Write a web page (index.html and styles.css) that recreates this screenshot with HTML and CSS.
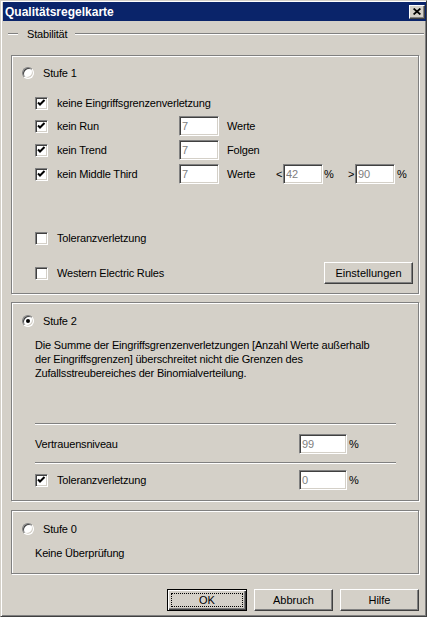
FILE: index.html
```html
<!DOCTYPE html>
<html lang="de">
<head>
  <meta charset="UTF-8">
  <title>Qualitätsregelkarte</title>
  <link rel="stylesheet" href="styles.css">
</head>
<body>
<div class="window">
  <div class="titlebar">
    <span class="title">Qualitätsregelkarte</span>
    <span class="close-btn">
      <svg width="8" height="7" viewBox="0 0 8 7"><path d="M0.6 0.5 L7.4 6.5 M7.4 0.5 L0.6 6.5" stroke="#000" stroke-width="1.7"/></svg>
    </span>
  </div>

  <div class="client">
    <div class="section-head">
      <span class="rule rule-short"></span>
      <span class="section-label">Stabilität</span>
      <span class="rule rule-long"></span>
    </div>

    <!-- Stufe 1 -->
    <div class="group group-s1">
      <div class="radio-row"><span class="radio"></span><span>Stufe 1</span></div>

      <div class="check-row s1-first">
        <span class="check"><svg width="9" height="9" viewBox="0 0 9 9"><polyline points="1,3.5 3,5.5 7.5,1" fill="none" stroke="#000" stroke-width="2"/></svg></span>
        <span>keine Eingriffsgrenzenverletzung</span>
      </div>

      <div class="field-row s1-run">
        <span class="check"><svg width="9" height="9" viewBox="0 0 9 9"><polyline points="1,3.5 3,5.5 7.5,1" fill="none" stroke="#000" stroke-width="2"/></svg></span>
        <span class="check-label">kein Run</span>
        <input class="num" value="7" readonly>
        <span class="unit">Werte</span>
      </div>

      <div class="field-row s1-next">
        <span class="check"><svg width="9" height="9" viewBox="0 0 9 9"><polyline points="1,3.5 3,5.5 7.5,1" fill="none" stroke="#000" stroke-width="2"/></svg></span>
        <span class="check-label">kein Trend</span>
        <input class="num" value="7" readonly>
        <span class="unit">Folgen</span>
      </div>

      <div class="field-row s1-next">
        <span class="check"><svg width="9" height="9" viewBox="0 0 9 9"><polyline points="1,3.5 3,5.5 7.5,1" fill="none" stroke="#000" stroke-width="2"/></svg></span>
        <span class="check-label">kein Middle Third</span>
        <input class="num" value="7" readonly>
        <span class="unit unit-fixed">Werte</span>
        <span class="cmp">&lt;</span>
        <input class="num" value="42" readonly>
        <span class="pct pct-lt">%</span>
        <span class="cmp">&gt;</span>
        <input class="num" value="90" readonly>
        <span class="pct">%</span>
      </div>

      <div class="check-row s1-tol">
        <span class="check"></span>
        <span>Toleranzverletzung</span>
      </div>

      <div class="field-row s1-western">
        <span class="check"></span>
        <span class="check-label">Western Electric Rules</span>
        <button type="button" class="btn btn-settings">Einstellungen</button>
      </div>
    </div>

    <!-- Stufe 2 -->
    <div class="group group-s2">
      <div class="radio-row"><span class="radio checked"></span><span>Stufe 2</span></div>
      <p class="note">Die Summe der Eingriffsgrenzenverletzungen [Anzahl Werte außerhalb<br>der Eingriffsgrenzen] überschreitet nicht die Grenzen des<br>Zufallsstreubereiches der Binomialverteilung.</p>

      <div class="divider s2-div1"></div>
      <div class="field-row s2-level">
        <span class="wide-label">Vertrauensniveau</span>
        <input class="num num-wide" value="99" readonly>
        <span class="pct">%</span>
      </div>

      <div class="divider s2-div2"></div>
      <div class="field-row s2-tol">
        <span class="check"><svg width="9" height="9" viewBox="0 0 9 9"><polyline points="1,3.5 3,5.5 7.5,1" fill="none" stroke="#000" stroke-width="2"/></svg></span>
        <span class="check-label tol-label">Toleranzverletzung</span>
        <input class="num num-wide" value="0" readonly>
        <span class="pct">%</span>
      </div>
    </div>

    <!-- Stufe 0 -->
    <div class="group group-s0">
      <div class="radio-row"><span class="radio"></span><span>Stufe 0</span></div>
      <p class="note s0-note">Keine Überprüfung</p>
    </div>

    <div class="actions">
      <button type="button" class="btn btn-default"><span class="focus">OK</span></button>
      <button type="button" class="btn">Abbruch</button>
      <button type="button" class="btn">Hilfe</button>
    </div>
  </div>
</div>
</body>
</html>
```

FILE: styles.css
```css
* {
  box-sizing: border-box;
}

body {
  margin: 0;
  font-family: "Liberation Sans", Arial, sans-serif;
  font-size: 11px;
  letter-spacing: -0.18px;
  color: #000;
  background: #d4d0c8;
}

.window {
  width: 427px;
  height: 617px;
  background: #d4d0c8;
  border: 1px solid;
  border-color: #d4d0c8 #404040 #404040 #d4d0c8;
  box-shadow: inset 1px 1px #fff, inset -1px -1px #808080;
  padding: 1px 0 0 2px;
}

/* title bar */
.titlebar {
  height: 19px;
  background: #0a246a;
  color: #fff;
  display: flex;
  align-items: center;
  justify-content: space-between;
  padding: 0 1px 0 2px;
}

.title {
  font-weight: bold;
  font-size: 12px;
  letter-spacing: 0;
}

.close-btn {
  width: 16px;
  height: 14px;
  background: #d4d0c8;
  border: 1px solid;
  border-color: #fff #404040 #404040 #fff;
  box-shadow: inset -1px -1px #808080;
  display: flex;
  align-items: center;
  justify-content: center;
}

.close-btn svg {
  display: block;
}

/* client area */
.client {
  padding-left: 8px;
}

.section-head {
  display: flex;
  align-items: center;
  height: 14px;
  margin: 6px 2px 0 -3px;
}

.rule {
  height: 2px;
  border-top: 1px solid #808080;
  border-bottom: 1px solid #fff;
}

.rule-short {
  width: 10px;
}

.section-label {
  margin: 0 8px 0 9px;
}

.rule-long {
  flex: 1;
}

.group {
  width: 408px;
  border: 1px solid #808080;
  box-shadow: 1px 1px #fff, inset 1px 1px #fff;
  padding-left: 10px;
}

.group-s1 {
  margin-top: 14px;
  height: 239px;
  padding-top: 9px;
}

.group-s2 {
  margin-top: 8px;
  height: 199px;
  padding-top: 10px;
}

.group-s0 {
  margin-top: 9px;
  height: 64px;
  padding-top: 10px;
}

/* radio */
.radio-row {
  display: flex;
  align-items: center;
  gap: 9px;
  height: 16px;
}

.radio {
  width: 12px;
  height: 12px;
  border-radius: 50%;
  background: #fff;
  border: 1px solid;
  border-color: #808080 #fff #fff #808080;
  box-shadow: inset 1px 1px #404040, inset -1px -1px #d4d0c8;
  display: flex;
  align-items: center;
  justify-content: center;
}

.radio.checked::after {
  content: "";
  width: 4px;
  height: 4px;
  border-radius: 50%;
  background: #000;
}

/* checkbox */
.check {
  flex: none;
  width: 13px;
  height: 13px;
  background: #fff;
  border: 1px solid;
  border-color: #808080 #fff #fff #808080;
  box-shadow: inset 1px 1px #404040, inset -1px -1px #d4d0c8;
  padding: 1px 0 0 1px;
}

.check svg {
  display: block;
}

.check-row {
  display: flex;
  align-items: center;
  gap: 9px;
  height: 16px;
  margin-left: 13px;
}

.field-row {
  display: flex;
  align-items: center;
  height: 20px;
  margin-left: 13px;
}

.check-label {
  margin-left: 9px;
  width: 122px;
}

.s1-first { margin-top: 14px; }
.s1-run { margin-top: 5px; }
.s1-next { margin-top: 4px; }
.s1-tol { margin-top: 46px; }

.s1-western {
  margin-top: 16px;
  height: 22px;
}

.s1-western .check-label {
  width: auto;
}

/* text inputs */
.num {
  width: 40px;
  height: 20px;
  font: inherit;
  color: #808080;
  background: #fff;
  border: 1px solid;
  border-color: #808080 #fff #fff #808080;
  box-shadow: inset 1px 1px #404040, inset -1px -1px #d4d0c8;
  padding: 0 0 0 2px;
  margin: 0;
  outline: none;
}

.num-wide {
  width: 48px;
}

.unit {
  margin-left: 8px;
}

.unit-fixed {
  width: 49px;
}

.cmp {
  width: 7px;
}

.pct {
  margin-left: 2px;
}

.pct-lt {
  margin-left: 1px;
  width: 24px;
}

/* Stufe 2 */
.note {
  margin: 9px 0 0 13px;
  line-height: 14px;
}

.divider {
  width: 361px;
  height: 2px;
  margin-left: 13px;
  border-top: 1px solid #808080;
  border-bottom: 1px solid #fff;
}

.s2-div1 { margin-top: 43px; }
.s2-level { margin-top: 9px; }
.s2-div2 { margin-top: 8px; }
.s2-tol { margin-top: 6px; }

.wide-label {
  width: 264px;
}

.tol-label {
  width: 242px;
}

/* buttons */
.btn {
  height: 22px;
  width: 79px;
  font: inherit;
  color: #000;
  background: #d4d0c8;
  border: 1px solid;
  border-color: #fff #404040 #404040 #fff;
  box-shadow: inset -1px -1px #808080;
  padding: 0;
  margin: 0;
  display: flex;
  align-items: center;
  justify-content: center;
}

.btn-settings {
  width: 89px;
  margin: 0 5px 0 auto;
}

.actions {
  width: 408px;
  margin-top: 15px;
  display: flex;
  justify-content: flex-end;
  gap: 7px;
}

.btn-default {
  width: 80px;
  border: 1px solid #000;
  box-shadow: inset 1px 1px #fff, inset -1px -1px #404040, inset -2px -2px #808080;
  padding: 3px;
}

.focus {
  flex: 1;
  align-self: stretch;
  border: 1px dotted #000;
  display: flex;
  align-items: center;
  justify-content: center;
}
```
